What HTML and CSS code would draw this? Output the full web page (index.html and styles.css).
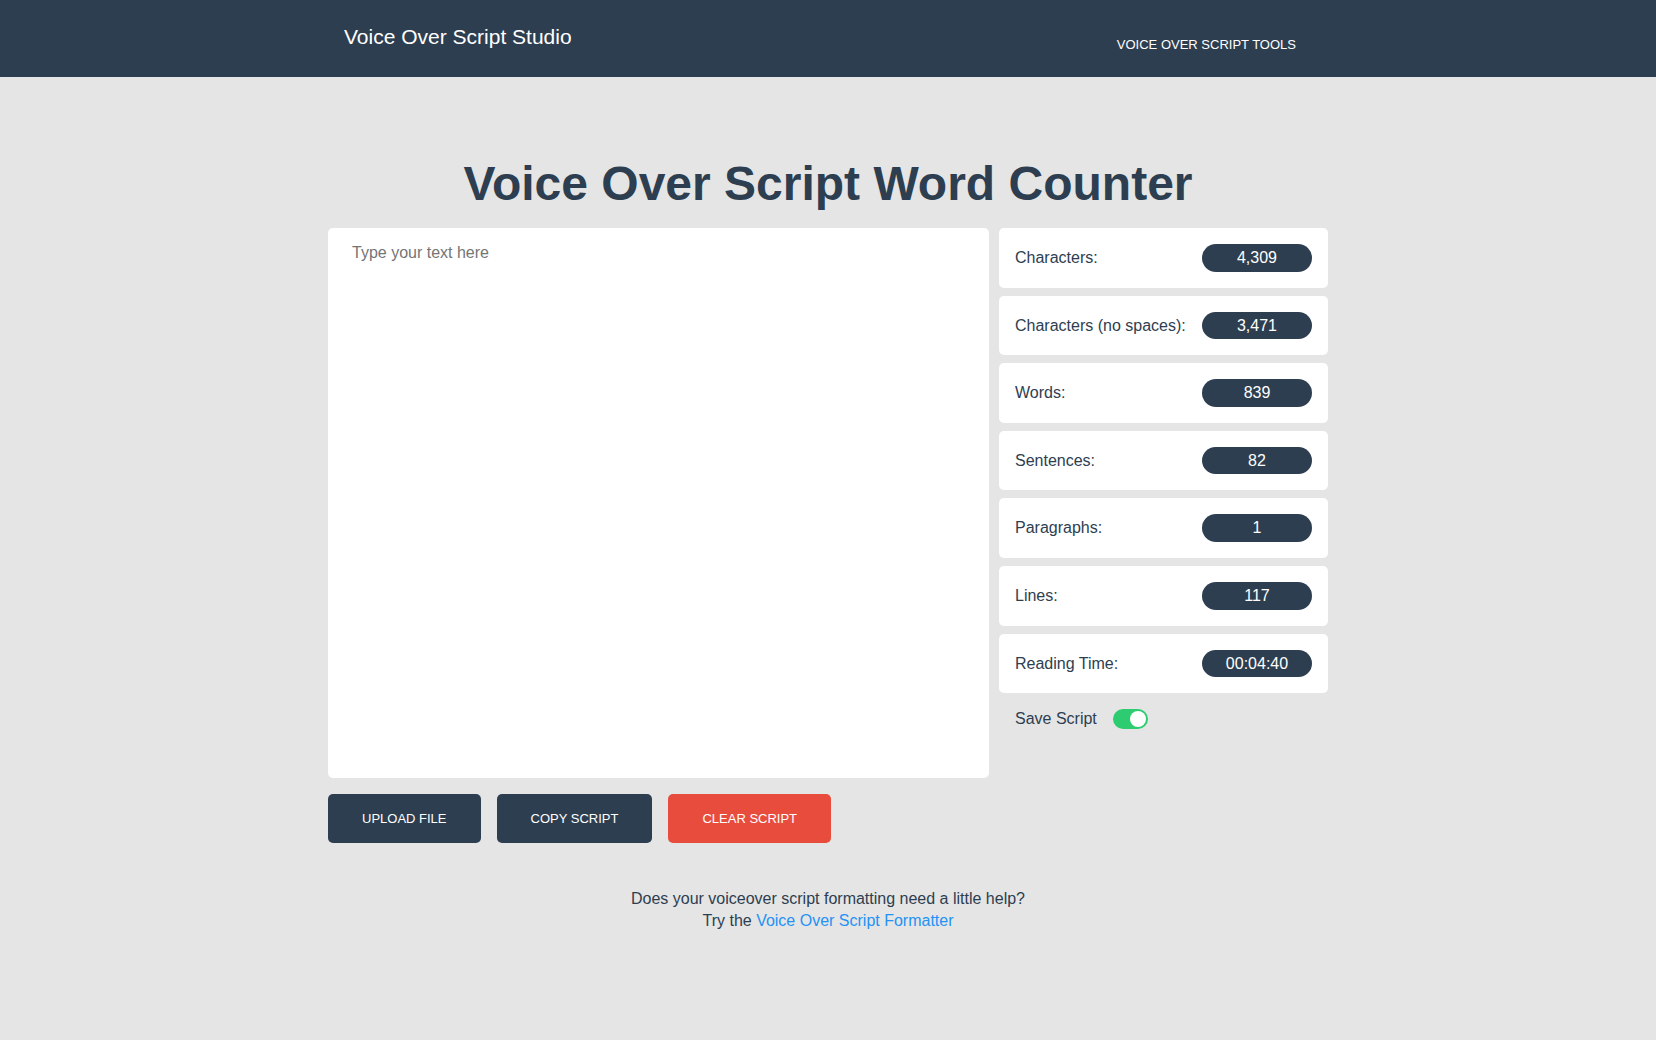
FILE: index.html
```html
<!DOCTYPE html>
<html lang="en">
<head>
<meta charset="utf-8">
<meta name="viewport" content="width=device-width, initial-scale=1">
<title>Voice Over Script Word Counter</title>
<link rel="stylesheet" href="styles.css">
</head>
<body>
<header class="site-header">
  <div class="container header-inner">
    <a class="brand" href="#">Voice Over Script Studio</a>
    <nav class="site-nav"><a class="nav-link" href="#">Voice Over Script Tools</a></nav>
  </div>
</header>
<main class="container main">
  <h1 class="title">Voice Over Script Word Counter</h1>
  <div class="counter">
    <textarea class="editor" aria-label="Script" placeholder="Type your text here"></textarea>
    <section class="sidebar">
      <dl class="stats">
        <div class="stat"><dt>Characters:</dt><dd class="pill">4,309</dd></div>
        <div class="stat"><dt>Characters (no spaces):</dt><dd class="pill">3,471</dd></div>
        <div class="stat"><dt>Words:</dt><dd class="pill">839</dd></div>
        <div class="stat"><dt>Sentences:</dt><dd class="pill">82</dd></div>
        <div class="stat"><dt>Paragraphs:</dt><dd class="pill">1</dd></div>
        <div class="stat"><dt>Lines:</dt><dd class="pill">117</dd></div>
        <div class="stat"><dt>Reading Time:</dt><dd class="pill">00:04:40</dd></div>
      </dl>
      <div class="save">
        <label for="save">Save Script</label>
        <input class="switch" type="checkbox" id="save" checked>
      </div>
    </section>
  </div>
  <div class="actions">
    <button class="button" type="button">Upload File</button>
    <button class="button" type="button">Copy Script</button>
    <button class="button button-danger" type="button">Clear Script</button>
  </div>
  <p class="help">Does your voiceover script formatting need a little help?<br>Try the <a class="help-link" href="#">Voice Over Script Formatter</a></p>
</main>
</body>
</html>
```
FILE: styles.css
```css
* {
  box-sizing: border-box;
}

body {
  margin: 0;
  background: #e5e5e5;
  color: #2d3e50;
  font: 16px/1.6 "Liberation Sans", Arial, sans-serif;
}

.container {
  max-width: 1000px;
  margin: 0 auto;
}

.site-header {
  background: #2d3e50;
}

.header-inner {
  display: flex;
  justify-content: space-between;
  align-items: flex-start;
  min-height: 77px;
  padding: 20px 32px 16px 16px;
}

.brand {
  color: #fff;
  font-size: 21px;
  text-decoration: none;
}

.site-nav {
  padding-top: 14px;
}

.nav-link {
  display: block;
  color: #fff;
  font-size: 13px;
  line-height: 22px;
  text-decoration: none;
  text-transform: uppercase;
}

.main {
  padding: 74px 0 80px;
}

.title {
  margin: 0 0 11px;
  font-size: 48px;
  line-height: 66px;
  text-align: center;
}

.counter {
  display: grid;
  grid-template-columns: minmax(0, 1fr) 329px;
  gap: 10px;
}

.editor {
  display: block;
  width: 100%;
  height: 550px;
  padding: 16px 24px;
  border: 0;
  border-radius: 5px;
  background: #fff;
  color: inherit;
  font: inherit;
  line-height: 18px;
  resize: none;
}

.editor::placeholder {
  color: #757575;
}

.stats {
  display: flex;
  flex-direction: column;
  gap: 8px;
  margin: 0;
}

.stat {
  display: flex;
  align-items: center;
  justify-content: space-between;
  padding: 16px;
  border-radius: 5px;
  background: #fff;
}

.pill {
  width: 110px;
  margin: 0;
  padding: 1px 0;
  border-radius: 16px;
  background: #2d3e50;
  color: #fff;
  text-align: center;
}

.save {
  display: flex;
  align-items: center;
  gap: 16px;
  padding: 13px 16px;
}

.switch {
  appearance: none;
  display: flex;
  justify-content: flex-start;
  width: 35px;
  height: 20px;
  margin: 0;
  padding: 2px;
  border-radius: 10px;
  background: #aaa;
}

.switch::before {
  content: "";
  width: 16px;
  height: 16px;
  border-radius: 50%;
  background: #fff;
}

.switch:checked {
  justify-content: flex-end;
  background: #2ecc71;
}

.actions {
  display: flex;
  gap: 16px;
  margin-top: 16px;
}

.button {
  padding: 16px 34px;
  border: 0;
  border-radius: 5px;
  background: #2d3e50;
  color: #fff;
  font: inherit;
  font-size: 13px;
  line-height: 17px;
  text-transform: uppercase;
}

.button-danger {
  background: #e84c3d;
}

.help {
  margin: 45px 0 0;
  line-height: 22px;
  text-align: center;
}

.help-link {
  color: #2492f4;
  text-decoration: none;
}
```
